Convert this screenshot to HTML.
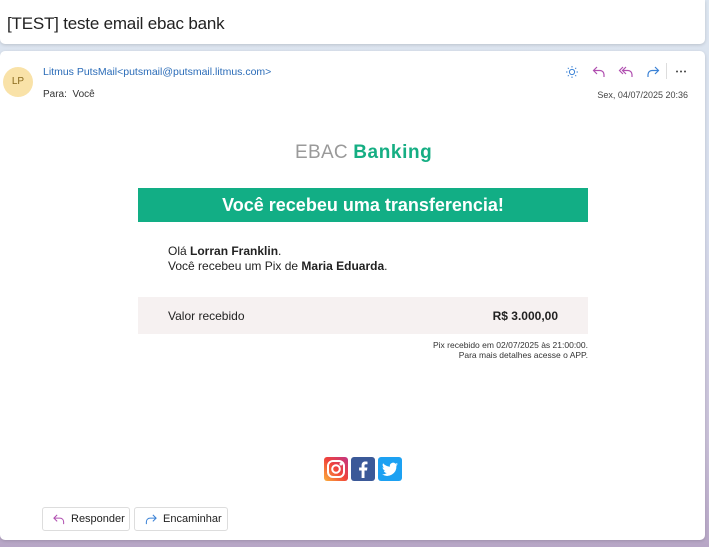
<!DOCTYPE html>
<html><head><meta charset="utf-8"><style>
*{box-sizing:border-box;margin:0;padding:0}
html,body{width:709px;height:547px;overflow:hidden}
body{font-family:"Liberation Sans",sans-serif;background:linear-gradient(180deg,#dde6f0 0%,#d6dcec 40%,#c9c0d8 80%,#b7a6c6 100%);position:relative}
.c1{position:absolute;left:0;top:0;width:705px;height:44px;background:#fff;border-radius:0 0 5px 5px;box-shadow:0 1px 3px rgba(0,0,0,.15)}
.c1 h1{font-weight:normal;font-size:17px;color:#222;position:absolute;left:7px;top:14px;letter-spacing:-0.2px}
.c2{position:absolute;left:0;top:51px;width:705px;height:489px;background:#fff;border-radius:5px;box-shadow:0 1px 3px rgba(0,0,0,.15)}
.av{position:absolute;left:3px;top:16px;width:30px;height:30px;border-radius:50%;background:#f9e2a8;color:#8a6a1c;font-size:10px;text-align:center;line-height:30px}
.from{position:absolute;left:43px;top:15px;font-size:10.5px;color:#2b6cb8}
.para{position:absolute;left:43px;top:38px;font-size:10px;color:#333}
.date{position:absolute;right:17px;top:39px;font-size:9px;color:#444}
.icons{position:absolute;left:562px;top:12px}
.icons svg{position:absolute}
.logo{position:absolute;left:295px;top:91px;font-size:19px;white-space:nowrap}
.logo .a{color:#9a9a9a;letter-spacing:.3px}
.logo .b{color:#15ae83;font-weight:bold;letter-spacing:.6px}
.ban{position:absolute;left:138px;top:137px;width:450px;height:34px;background:#12ae85;color:#fff;font-weight:bold;font-size:18px;text-align:center;line-height:34px}
.txt{position:absolute;left:168px;top:193px;font-size:12px;color:#222;line-height:15px}
.val{position:absolute;left:138px;top:246px;width:450px;height:37px;background:#f6f1f1;font-size:12px;color:#222}
.val .l{position:absolute;left:30px;top:12px}
.val .r{position:absolute;right:30px;top:12px;font-weight:bold}
.sm{position:absolute;right:117px;top:289px;font-size:8.5px;color:#333;text-align:right;line-height:10px}
.soc{position:absolute;left:324px;top:406px}
.soc div{position:absolute;top:0;width:24px;height:24px;border-radius:3px}
.btn{position:absolute;top:456px;height:24px;border:1px solid #ddd;border-radius:3px;font-size:11px;color:#222;line-height:22px;padding-left:28px}
.btn svg{position:absolute;left:9px;top:5px}
</style></head><body>
<div class="c1"><h1>[TEST] teste email ebac bank</h1></div>
<div class="c2">
<div class="av">LP</div>
<div class="from">Litmus PutsMail&lt;putsmail@putsmail.litmus.com&gt;</div>
<div class="para">Para:&nbsp; Você</div>
<div class="date">Sex, 04/07/2025 20:36</div>
<div class="icons">
<svg style="left:3px;top:2px" width="14" height="14" viewBox="0 0 14 14" fill="none" stroke="#3b82d6" stroke-width="1"><circle cx="7" cy="7" r="2.6"/><path d="M7 1v1.5M7 11.5V13M1 7h1.5M11.5 7H13M2.8 2.8l1 1M10.2 10.2l1 1M2.8 11.2l1-1M10.2 3.8l1-1"/></svg>
<svg style="left:30px;top:2px" width="14" height="14" viewBox="0 0 14 14" fill="none" stroke="#b04fb0" stroke-width="1.2"><path d="M5 2L1.5 5.5 5 9M1.5 5.5H8a4 4 0 0 1 4 4V12"/></svg>
<svg style="left:56px;top:2px" width="16" height="14" viewBox="0 0 16 14" fill="none" stroke="#b04fb0" stroke-width="1.2"><path d="M5 2L1.5 5.5 5 9M8 2L4.5 5.5 8 9M4.5 5.5H10a4 4 0 0 1 4 4V12"/></svg>
<svg style="left:84px;top:2px" width="14" height="14" viewBox="0 0 14 14" fill="none" stroke="#3b82d6" stroke-width="1.2"><path d="M9 2l3.5 3.5L9 9M12.5 5.5H6a4 4 0 0 0-4 4V12"/></svg>
<div style="position:absolute;left:104px;top:0;width:1px;height:16px;background:#ddd"></div>
<svg style="left:113px;top:7px" width="12" height="3" viewBox="0 0 12 3" fill="#444"><circle cx="2" cy="1.5" r="1"/><circle cx="6" cy="1.5" r="1"/><circle cx="10" cy="1.5" r="1"/></svg>
</div>
<div class="logo"><span class="a">EBAC</span> <span class="b">Banking</span></div>
<div class="ban">Você recebeu uma transferencia!</div>
<div class="txt">Olá <b>Lorran Franklin</b>.<br>Você recebeu um Pix de <b>Maria Eduarda</b>.</div>
<div class="val"><span class="l">Valor recebido</span><span class="r">R$ 3.000,00</span></div>
<div class="sm">Pix recebido em 02/07/2025 às 21:00:00.<br>Para mais detalhes acesse o APP.</div>
<div class="soc">
<div style="left:0;background:linear-gradient(45deg,#fbb03b,#f0433a 50%,#c13584)"><svg width="24" height="24" viewBox="0 0 24 24" fill="none" stroke="#fff" stroke-width="2"><rect x="4" y="4" width="16" height="16" rx="5"/><circle cx="12" cy="12" r="3.8"/><circle cx="17" cy="7" r=".5" fill="#fff"/></svg></div>
<div style="left:27px;background:#3b5998"><svg width="24" height="24" viewBox="0 0 24 24"><path d="M13.5 21v-7.5h2.5l.4-3h-2.9V8.7c0-.9.3-1.4 1.5-1.4h1.5V4.6c-.3 0-1.2-.1-2.2-.1-2.2 0-3.700 1.3-3.7 3.8v2.2H8.1v3h2.5V21z" fill="#fff"/></svg></div>
<div style="left:54px;background:#1da1f2"><svg width="24" height="24" viewBox="0 0 24 24"><path d="M20 7.2c-.6.3-1.2.4-1.9.5.7-.4 1.2-1 1.4-1.8-.6.4-1.3.6-2 .8a3.3 3.3 0 0 0-5.6 3C9.2 9.6 6.8 8.3 5.1 6.3c-.9 1.6-.4 3.5 1 4.4-.5 0-1-.2-1.5-.4 0 1.6 1.1 3 2.6 3.300-.5.1-1 .2-1.5.1.4 1.3 1.7 2.300 3.1 2.300A6.6 6.6 0 0 1 4 17.3 9.3 9.3 0 0 0 18.4 9v-.4c.6-.4 1.2-.9 1.6-1.4z" fill="#fff"/></svg></div>
</div>
<div class="btn" style="left:42px;width:88px">
<svg width="14" height="13" viewBox="0 0 14 14" fill="none" stroke="#b04fb0" stroke-width="1.1"><path d="M5 2L1.5 5.5 5 9M1.5 5.5H8a4 4 0 0 1 4 4V12"/></svg>Responder</div>
<div class="btn" style="left:134px;width:94px">
<svg width="14" height="13" viewBox="0 0 14 14" fill="none" stroke="#3b82d6" stroke-width="1.1"><path d="M9 2l3.5 3.5L9 9M12.5 5.5H6a4 4 0 0 0-4 4V12"/></svg>Encaminhar</div>
</div>
</body></html>
